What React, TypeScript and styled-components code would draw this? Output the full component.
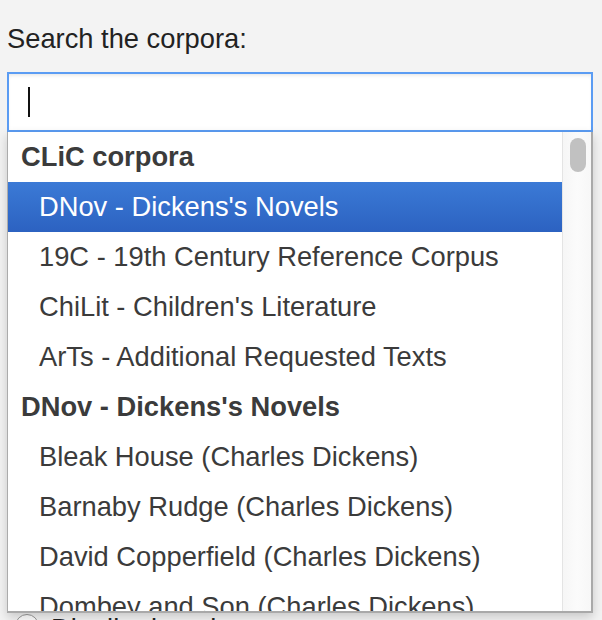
import React from "react";
import styled, { createGlobalStyle } from "styled-components";

const Global = createGlobalStyle`
  html, body { margin: 0; padding: 0; background: #f3f3f3; }
  body { font-family: "Liberation Sans", Arial, Helvetica, sans-serif; overflow: hidden; }
`;

const Page = styled.div`
  padding: 0 9px 0 7px;
  width: 586px;
  min-height: 660px;
`;

const Label = styled.label`
  display: block;
  font-size: 27.3px;
  line-height: 31px;
  color: #222;
  padding-top: 23px;
  margin-bottom: 18px;
`;

const Field = styled.div`
  position: relative;
`;

const SearchBox = styled.div`
  box-sizing: border-box;
  height: 60px;
  width: 586px;
  background: #fff;
  border: 2px solid #5b9cf3;
  box-shadow: inset 0 3px 4px -2px rgba(0, 0, 0, 0.12);
  display: flex;
  align-items: center;
  padding-left: 19px;
`;

const Caret = styled.span`
  display: block;
  width: 2px;
  height: 30px;
  margin-top: -1px;
  background: #111;
`;

const Popup = styled.div`
  position: absolute;
  top: 60px;
  left: 0;
  width: 586px;
  height: 481px;
  box-sizing: border-box;
  background: #fff;
  border-left: 1.5px solid #ababab;
  border-right: 2px solid #a9a9a9;
  border-bottom: 2px solid #a9a9a9;
  box-shadow: 0 4px 10px rgba(0, 0, 0, 0.18);
  display: flex;
  z-index: 5;
`;

const List = styled.ul`
  flex: 1;
  margin: 0;
  padding: 0;
  list-style: none;
  overflow: hidden;
`;

const Row = styled.li<{ $group?: boolean; $selected?: boolean }>`
  height: 50px;
  line-height: 50px;
  font-size: 27.3px;
  white-space: nowrap;
  padding-left: ${(p) => (p.$group ? "13px" : "31px")};
  font-weight: ${(p) => (p.$group ? 700 : 400)};
  color: ${(p) => (p.$selected ? "#fff" : "#3b3b3b")};
  background: ${(p) =>
    p.$selected ? "linear-gradient(#3b7ad6, #2c62c1)" : "transparent"};
`;

const Track = styled.div`
  width: 29px;
  flex: none;
  box-sizing: border-box;
  background: linear-gradient(90deg, #f6f6f6, #fbfbfb 50%, #f7f7f7);
  border-left: 1.5px solid #e4e4e4;
  padding: 6px 0 0 7px;
`;

const Thumb = styled.div`
  width: 16px;
  height: 34px;
  border-radius: 8px;
  background: #c1c1c1;
`;

const Options = styled.div`
  margin-top: 481px;
  padding-left: 8px;
  display: flex;
  flex-direction: column;
`;

const RadioRow = styled.label`
  display: flex;
  align-items: flex-start;
  gap: 12px;
  height: 44px;
  font-size: 27.3px;
  line-height: 31px;
  color: #222;
`;

const Radio = styled.span`
  width: 22px;
  height: 22px;
  margin-top: 1px;
  border-radius: 50%;
  border: 1px solid #9a9a9a;
  background: linear-gradient(#fff, #f2f2f2);
  flex: none;
`;

const groups: { title: string; items: string[] }[] = [
  {
    title: "CLiC corpora",
    items: [
      "DNov - Dickens's Novels",
      "19C - 19th Century Reference Corpus",
      "ChiLit - Children's Literature",
      "ArTs - Additional Requested Texts",
    ],
  },
  {
    title: "DNov - Dickens's Novels",
    items: [
      "Bleak House (Charles Dickens)",
      "Barnaby Rudge (Charles Dickens)",
      "David Copperfield (Charles Dickens)",
      "Dombey and Son (Charles Dickens)",
    ],
  },
];

export default function App() {
  return (
    <>
      <Global />
      <Page>
        <Label>Search the corpora:</Label>
        <Field>
          <SearchBox>
            <Caret />
          </SearchBox>
          <Popup>
            <List>
              {groups.map((g) => (
                <React.Fragment key={g.title}>
                  <Row $group>{g.title}</Row>
                  {g.items.map((it, i) => (
                    <Row key={it} $selected={g.title === "CLiC corpora" && i === 0}>
                      {it}
                    </Row>
                  ))}
                </React.Fragment>
              ))}
            </List>
            <Track>
              <Thumb />
            </Track>
          </Popup>
          <Options>
            <RadioRow>
              <Radio />
              Distribution plot
            </RadioRow>
          </Options>
        </Field>
      </Page>
    </>
  );
}
